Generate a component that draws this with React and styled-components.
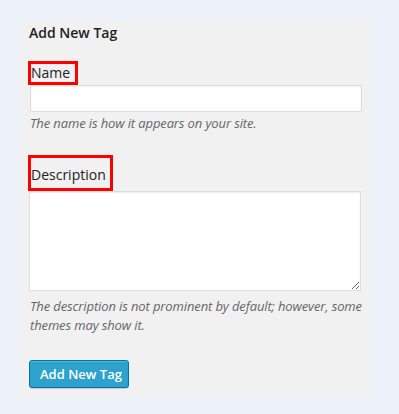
import styled, { createGlobalStyle } from "styled-components";

const GlobalStyle = createGlobalStyle`
  html, body {
    margin: 0;
    padding: 0;
    background: #edf1f9;
    font-family: "Open Sans", "Liberation Sans", sans-serif;
    color: #222;
  }
`;

export default function App() {
  return (
    <Page>
      <GlobalStyle />
      <Panel>
        <Heading>Add New Tag</Heading>
        <Field $top={18}>
          <Label htmlFor="tag-name" $pad="0 5px 0 0">
            Name
          </Label>
          <TextInput id="tag-name" type="text" />
          <Help>The name is how it appears on your site.</Help>
        </Field>
        <Field $top={21}>
          <Label htmlFor="tag-description" $pad="8px 4px 4px 0">
            Description
          </Label>
          <TextArea id="tag-description" />
          <Help $top={6}>
            The description is not prominent by default; however, some themes
            may show it.
          </Help>
        </Field>
        <SubmitButton type="button">Add New Tag</SubmitButton>
      </Panel>
    </Page>
  );
}

const Page = styled.div`
  padding: 20px 0 17px 20px;
`;

const Panel = styled.div`
  width: 343px;
  background: #f1f1f1;
  padding: 3px 0 10px 9px;
  display: flex;
  flex-direction: column;
  align-items: flex-start;
`;

const Heading = styled.h3`
  margin: 0;
  font-size: 14px;
  line-height: 20px;
  font-weight: 600;
  color: #222;
`;

const Field = styled.div`
  display: flex;
  flex-direction: column;
  align-items: flex-start;
  margin-top: ${(p) => p.$top}px;
`;

const Label = styled.label`
  display: inline-block;
  border: 3px solid #ff0000;
  padding: ${(p) => p.$pad};
  margin-left: -1px;
  font-size: 14px;
  line-height: 18px;
  color: #222;
`;

const TextInput = styled.input`
  box-sizing: border-box;
  display: block;
  width: 332px;
  height: 27px;
  margin: 0 0 0 1px;
  border: 1px solid #dddddd;
  background: #fff;
  box-shadow: inset 0 1px 2px rgba(0, 0, 0, 0.07);
  font-family: inherit;
  font-size: 14px;
  outline: none;
`;

const TextArea = styled.textarea`
  box-sizing: border-box;
  display: block;
  width: 332px;
  height: 100px;
  margin: 0;
  border: 1px solid #dddddd;
  background: #fff;
  box-shadow: inset 0 1px 2px rgba(0, 0, 0, 0.07);
  font-family: inherit;
  font-size: 14px;
  outline: none;
`;

const Help = styled.p`
  margin: ${(p) => p.$top || 2}px 0 0 1px;
  width: 340px;
  font-size: 13px;
  line-height: 19.5px;
  letter-spacing: -0.12px;
  font-style: italic;
  color: #666;
`;

const SubmitButton = styled.button`
  margin-top: 24px;
  box-sizing: border-box;
  width: 100px;
  height: 28px;
  padding: 0 10px;
  border: 1px solid #0074a2;
  border-radius: 3px;
  background: #2ea2cc;
  box-shadow: inset 0 1px 0 rgba(120, 200, 230, 0.5),
    0 1px 0 rgba(0, 0, 0, 0.15);
  color: #fff;
  font-family: inherit;
  font-size: 13px;
  font-weight: 600;
  line-height: 26px;
  white-space: nowrap;
  cursor: pointer;
`;
